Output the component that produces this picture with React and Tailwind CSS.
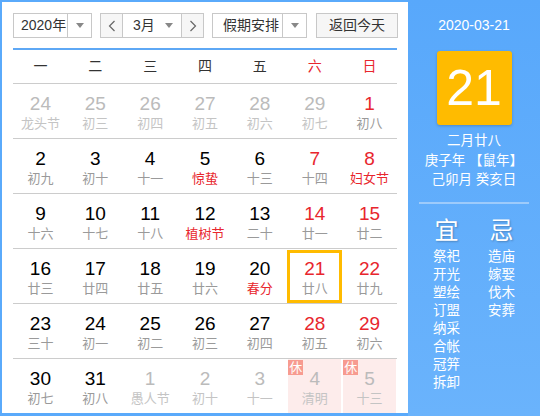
import React from 'react';

const weekdays = ['一', '二', '三', '四', '五', '六', '日'];

// n: number, l: lunar, o: other month, r: red number, lr: red lunar, t: today, h: holiday
const rows = [
    [
        { n: 24, l: '龙头节', o: true },
        { n: 25, l: '初三', o: true },
        { n: 26, l: '初四', o: true },
        { n: 27, l: '初五', o: true },
        { n: 28, l: '初六', o: true },
        { n: 29, l: '初七', o: true },
        { n: 1, l: '初八', r: true },
    ],
    [
        { n: 2, l: '初九' },
        { n: 3, l: '初十' },
        { n: 4, l: '十一' },
        { n: 5, l: '惊蛰', lr: true },
        { n: 6, l: '十三' },
        { n: 7, l: '十四', r: true },
        { n: 8, l: '妇女节', r: true, lr: true },
    ],
    [
        { n: 9, l: '十六' },
        { n: 10, l: '十七' },
        { n: 11, l: '十八' },
        { n: 12, l: '植树节', lr: true },
        { n: 13, l: '二十' },
        { n: 14, l: '廿一', r: true },
        { n: 15, l: '廿二', r: true },
    ],
    [
        { n: 16, l: '廿三' },
        { n: 17, l: '廿四' },
        { n: 18, l: '廿五' },
        { n: 19, l: '廿六' },
        { n: 20, l: '春分', lr: true },
        { n: 21, l: '廿八', r: true, t: true },
        { n: 22, l: '廿九', r: true },
    ],
    [
        { n: 23, l: '三十' },
        { n: 24, l: '初一' },
        { n: 25, l: '初二' },
        { n: 26, l: '初三' },
        { n: 27, l: '初四' },
        { n: 28, l: '初五', r: true },
        { n: 29, l: '初六', r: true },
    ],
    [
        { n: 30, l: '初七' },
        { n: 31, l: '初八' },
        { n: 1, l: '愚人节', o: true },
        { n: 2, l: '初十', o: true },
        { n: 3, l: '十一', o: true },
        { n: 4, l: '清明', o: true, h: true },
        { n: 5, l: '十三', o: true, h: true },
    ],
];

const yi = ['祭祀', '开光', '塑绘', '订盟', '纳采', '合帐', '冠笄', '拆卸'];
const ji = ['造庙', '嫁娶', '伐木', '安葬'];

function Caret() {
    return <span className="block w-0 h-0 border-x-[4px] border-x-transparent border-t-[5px] border-t-[#888]" />;
}

function Chevron({ dir }) {
    return (
        <svg width="8" height="12" viewBox="0 0 8 12" fill="none" stroke="#666" strokeWidth="1.2">
            {dir === 'left' ? <path d="M6.5 1 L1.5 6 L6.5 11" /> : <path d="M1.5 1 L6.5 6 L1.5 11" />}
        </svg>
    );
}

function DayCell({ d }) {
    let numColor = 'text-black';
    if (d.o) numColor = 'text-[#bbbbbb]';
    else if (d.r) numColor = 'text-[#e8262d]';
    let lunarColor = d.o ? 'text-[#c4c4c4]' : 'text-[#9a9a9a]';
    if (d.lr) lunarColor = 'text-[#e8262d]';

    return (
        <div className={`relative flex flex-col items-center ${d.h ? 'bg-[#fdeceb] mx-px' : ''}`}>
            {d.h && (
                <span className="absolute left-0 top-px w-[15px] h-[15px] bg-[#f79b90] text-white text-[13px] leading-[15px] text-center">
                    休
                </span>
            )}
            {d.t && <span className="absolute inset-x-0 top-px bottom-0 border-[3px] border-[#ffbb00]" />}
            <span className={`mt-[9px] text-[19px] leading-[22px] ${numColor}`}>{d.n}</span>
            <span className={`mt-[1px] text-[13px] leading-[16px] ${lunarColor}`}>{d.l}</span>
        </div>
    );
}

export default function App() {
    return (
        <div
            className="w-[540px] h-[416px] flex bg-[#5aaafb] overflow-hidden"
            style={{ fontFamily: '"Liberation Sans", "Noto Sans CJK SC", sans-serif' }}
        >
            {/* left calendar */}
            <div className="w-[406px] h-[411px] ml-[2px] mt-[2px] bg-white">
                <div className="flex h-[25px] mt-[11px] ml-[11px] text-[14px] text-[#333] whitespace-nowrap">
                    <div className="flex w-[79px] border border-[#c8c8c8]">
                        <span className="flex-1 pl-[7px] leading-[23px]">2020年</span>
                        <span className="w-[24px] flex items-center justify-center border-l border-[#c8c8c8]">
                            <Caret />
                        </span>
                    </div>
                    <div className="flex w-[104px] ml-[8px] border border-[#c8c8c8]">
                        <span className="w-[22px] flex items-center justify-center bg-[#f6f6f6] border-r border-[#c8c8c8]">
                            <Chevron dir="left" />
                        </span>
                        <span className="flex-1 flex items-center justify-between pl-[10px] pr-[8px]">
                            <span className="leading-[23px]">3月</span>
                            <Caret />
                        </span>
                        <span className="w-[22px] flex items-center justify-center bg-[#f6f6f6] border-l border-[#c8c8c8]">
                            <Chevron dir="right" />
                        </span>
                    </div>
                    <div className="flex w-[95px] ml-[8px] border border-[#c8c8c8]">
                        <span className="flex-1 pl-[10px] leading-[23px]">假期安排</span>
                        <span className="w-[24px] flex items-center justify-center border-l border-[#c8c8c8]">
                            <Caret />
                        </span>
                    </div>
                    <div className="w-[82px] ml-[9px] border border-[#c8c8c8] bg-[#f6f6f6] text-center leading-[23px]">
                        返回今天
                    </div>
                </div>

                <div className="w-[384px] ml-[11px] mt-[10px] border-t-2 border-[#5ea8f5]">
                    <div className="grid grid-cols-7 h-[33px] items-center text-[14px]">
                        {weekdays.map((w, i) => (
                            <span key={w} className={`text-center ${i > 4 ? 'text-[#e8262d]' : 'text-[#333]'}`}>
                                {w}
                            </span>
                        ))}
                    </div>
                    {rows.map((row, ri) => (
                        <div key={ri} className="grid grid-cols-7 h-[55px] border-t border-[#cccccc]">
                            {row.map((d, ci) => (
                                <DayCell key={ci} d={d} />
                            ))}
                        </div>
                    ))}
                </div>
            </div>

            {/* right info panel */}
            <div className="flex-1 flex flex-col items-center text-white bg-gradient-to-b from-[#58a8fb] to-[#6ab3fc]">
                <div className="mt-[16px] text-[14px] leading-[18px]">2020-03-21</div>
                <div className="mt-[17px] w-[75px] h-[74px] rounded-[3px] bg-[#ffbb00] shadow-[0_1px_3px_rgba(0,0,0,0.2)] flex items-center justify-center text-[50px] leading-none">
                    21
                </div>
                <div className="mt-[6px] text-[13.5px] leading-[19.5px] text-center">
                    <div>二月廿八</div>
                    <div>庚子年 【鼠年】</div>
                    <div>己卯月 癸亥日</div>
                </div>
                <div className="mt-[12px] w-[110px] h-[2px] bg-[#9dcbfb]" />
                <div className="mt-[12px] w-[110px] flex">
                    <div className="w-[55px] flex flex-col items-center">
                        <span className="text-[24px] leading-[30px] [text-shadow:1px_1px_2px_rgba(0,0,0,0.25)]">宜</span>
                        <div className="mt-[2px] text-[13.5px] leading-[18px]">
                            {yi.map((t) => (
                                <div key={t}>{t}</div>
                            ))}
                        </div>
                    </div>
                    <div className="w-[55px] flex flex-col items-center">
                        <span className="text-[24px] leading-[30px] [text-shadow:1px_1px_2px_rgba(0,0,0,0.25)]">忌</span>
                        <div className="mt-[2px] text-[13.5px] leading-[18px]">
                            {ji.map((t) => (
                                <div key={t}>{t}</div>
                            ))}
                        </div>
                    </div>
                </div>
            </div>
        </div>
    );
}
